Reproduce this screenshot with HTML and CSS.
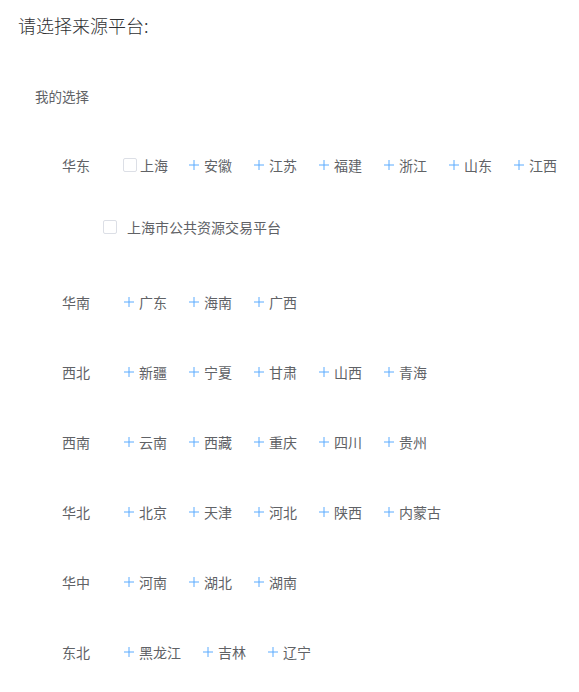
FILE: index.html
```html
<!DOCTYPE html>
<html lang="zh">
<head>
<meta charset="utf-8">
<title>请选择来源平台</title>
<link rel="stylesheet" href="styles.css">
</head>
<body>
<h1 class="title">请选择来源平台:</h1>
<div class="mine">我的选择</div>
<div class="regions">
  <div class="region r-first">
    <div class="line">
      <span class="label">华东</span>
      <span class="item check-item"><span class="box"></span><span class="txt">上海</span></span>
      <span class="item"><svg class="plus" viewBox="0 0 10 10"><path d="M0 5H10M5 0V10"/></svg><span class="txt">安徽</span></span>
      <span class="item"><svg class="plus" viewBox="0 0 10 10"><path d="M0 5H10M5 0V10"/></svg><span class="txt">江苏</span></span>
      <span class="item"><svg class="plus" viewBox="0 0 10 10"><path d="M0 5H10M5 0V10"/></svg><span class="txt">福建</span></span>
      <span class="item"><svg class="plus" viewBox="0 0 10 10"><path d="M0 5H10M5 0V10"/></svg><span class="txt">浙江</span></span>
      <span class="item"><svg class="plus" viewBox="0 0 10 10"><path d="M0 5H10M5 0V10"/></svg><span class="txt">山东</span></span>
      <span class="item"><svg class="plus" viewBox="0 0 10 10"><path d="M0 5H10M5 0V10"/></svg><span class="txt">江西</span></span>
    </div>
    <div class="line sub">
      <span class="box"></span><span class="sub-txt">上海市公共资源交易平台</span>
    </div>
  </div>
  <div class="region r-after-sub">
    <div class="line">
      <span class="label">华南</span>
      <span class="item"><svg class="plus" viewBox="0 0 10 10"><path d="M0 5H10M5 0V10"/></svg><span class="txt">广东</span></span>
      <span class="item"><svg class="plus" viewBox="0 0 10 10"><path d="M0 5H10M5 0V10"/></svg><span class="txt">海南</span></span>
      <span class="item"><svg class="plus" viewBox="0 0 10 10"><path d="M0 5H10M5 0V10"/></svg><span class="txt">广西</span></span>
    </div>
  </div>
  <div class="region">
    <div class="line">
      <span class="label">西北</span>
      <span class="item"><svg class="plus" viewBox="0 0 10 10"><path d="M0 5H10M5 0V10"/></svg><span class="txt">新疆</span></span>
      <span class="item"><svg class="plus" viewBox="0 0 10 10"><path d="M0 5H10M5 0V10"/></svg><span class="txt">宁夏</span></span>
      <span class="item"><svg class="plus" viewBox="0 0 10 10"><path d="M0 5H10M5 0V10"/></svg><span class="txt">甘肃</span></span>
      <span class="item"><svg class="plus" viewBox="0 0 10 10"><path d="M0 5H10M5 0V10"/></svg><span class="txt">山西</span></span>
      <span class="item"><svg class="plus" viewBox="0 0 10 10"><path d="M0 5H10M5 0V10"/></svg><span class="txt">青海</span></span>
    </div>
  </div>
  <div class="region">
    <div class="line">
      <span class="label">西南</span>
      <span class="item"><svg class="plus" viewBox="0 0 10 10"><path d="M0 5H10M5 0V10"/></svg><span class="txt">云南</span></span>
      <span class="item"><svg class="plus" viewBox="0 0 10 10"><path d="M0 5H10M5 0V10"/></svg><span class="txt">西藏</span></span>
      <span class="item"><svg class="plus" viewBox="0 0 10 10"><path d="M0 5H10M5 0V10"/></svg><span class="txt">重庆</span></span>
      <span class="item"><svg class="plus" viewBox="0 0 10 10"><path d="M0 5H10M5 0V10"/></svg><span class="txt">四川</span></span>
      <span class="item"><svg class="plus" viewBox="0 0 10 10"><path d="M0 5H10M5 0V10"/></svg><span class="txt">贵州</span></span>
    </div>
  </div>
  <div class="region">
    <div class="line">
      <span class="label">华北</span>
      <span class="item"><svg class="plus" viewBox="0 0 10 10"><path d="M0 5H10M5 0V10"/></svg><span class="txt">北京</span></span>
      <span class="item"><svg class="plus" viewBox="0 0 10 10"><path d="M0 5H10M5 0V10"/></svg><span class="txt">天津</span></span>
      <span class="item"><svg class="plus" viewBox="0 0 10 10"><path d="M0 5H10M5 0V10"/></svg><span class="txt">河北</span></span>
      <span class="item"><svg class="plus" viewBox="0 0 10 10"><path d="M0 5H10M5 0V10"/></svg><span class="txt">陕西</span></span>
      <span class="item"><svg class="plus" viewBox="0 0 10 10"><path d="M0 5H10M5 0V10"/></svg><span class="txt">内蒙古</span></span>
    </div>
  </div>
  <div class="region">
    <div class="line">
      <span class="label">华中</span>
      <span class="item"><svg class="plus" viewBox="0 0 10 10"><path d="M0 5H10M5 0V10"/></svg><span class="txt">河南</span></span>
      <span class="item"><svg class="plus" viewBox="0 0 10 10"><path d="M0 5H10M5 0V10"/></svg><span class="txt">湖北</span></span>
      <span class="item"><svg class="plus" viewBox="0 0 10 10"><path d="M0 5H10M5 0V10"/></svg><span class="txt">湖南</span></span>
    </div>
  </div>
  <div class="region">
    <div class="line">
      <span class="label">东北</span>
      <span class="item"><svg class="plus" viewBox="0 0 10 10"><path d="M0 5H10M5 0V10"/></svg><span class="txt">黑龙江</span></span>
      <span class="item"><svg class="plus" viewBox="0 0 10 10"><path d="M0 5H10M5 0V10"/></svg><span class="txt">吉林</span></span>
      <span class="item"><svg class="plus" viewBox="0 0 10 10"><path d="M0 5H10M5 0V10"/></svg><span class="txt">辽宁</span></span>
    </div>
  </div>
</div>
</body>
</html>
```

FILE: styles.css
```css
* { box-sizing: border-box; }
html, body { margin: 0; padding: 0; background: #fff; }
body {
  font-family: "Microsoft YaHei", "Noto Sans CJK SC", "Noto Sans", sans-serif;
  color: #606266;
  font-size: 14px;
}
.title {
  margin: 0;
  padding: 10px 18px 0;
  font-size: 18px;
  font-weight: 300;
  line-height: 30px;
  color: #303133;
}
.mine {
  margin-top: 46px;
  padding-left: 35px;
  font-size: 13.5px;
  line-height: 20px;
  color: #606266;
}
.regions {
  padding-left: 62px;
  margin-top: 49px;
}
.region { margin-top: 50px; }
.region.r-first { margin-top: 0; }
.region.r-after-sub { margin-top: 55px; }
.line {
  display: flex;
  align-items: center;
  height: 20px;
  line-height: 20px;
  white-space: nowrap;
}
.label { width: 62px; flex: none; }
.item {
  display: inline-flex;
  align-items: center;
  margin-right: 22px;
}
.plus {
  width: 10px;
  height: 10px;
  margin-right: 5px;
  stroke: #5aabff;
  stroke-width: 1;
  fill: none;
}
.box {
  display: inline-block;
  width: 14px;
  height: 14px;
  border: 1px solid #dcdfe6;
  border-radius: 2px;
  background: #fff;
  flex: none;
}
.check-item { margin-left: -1px; margin-right: 21px; }
.check-item .box { margin-right: 3px; }
.sub { margin-top: 42px; margin-left: 41px; }
.sub-txt { margin-left: 10px; }
```
